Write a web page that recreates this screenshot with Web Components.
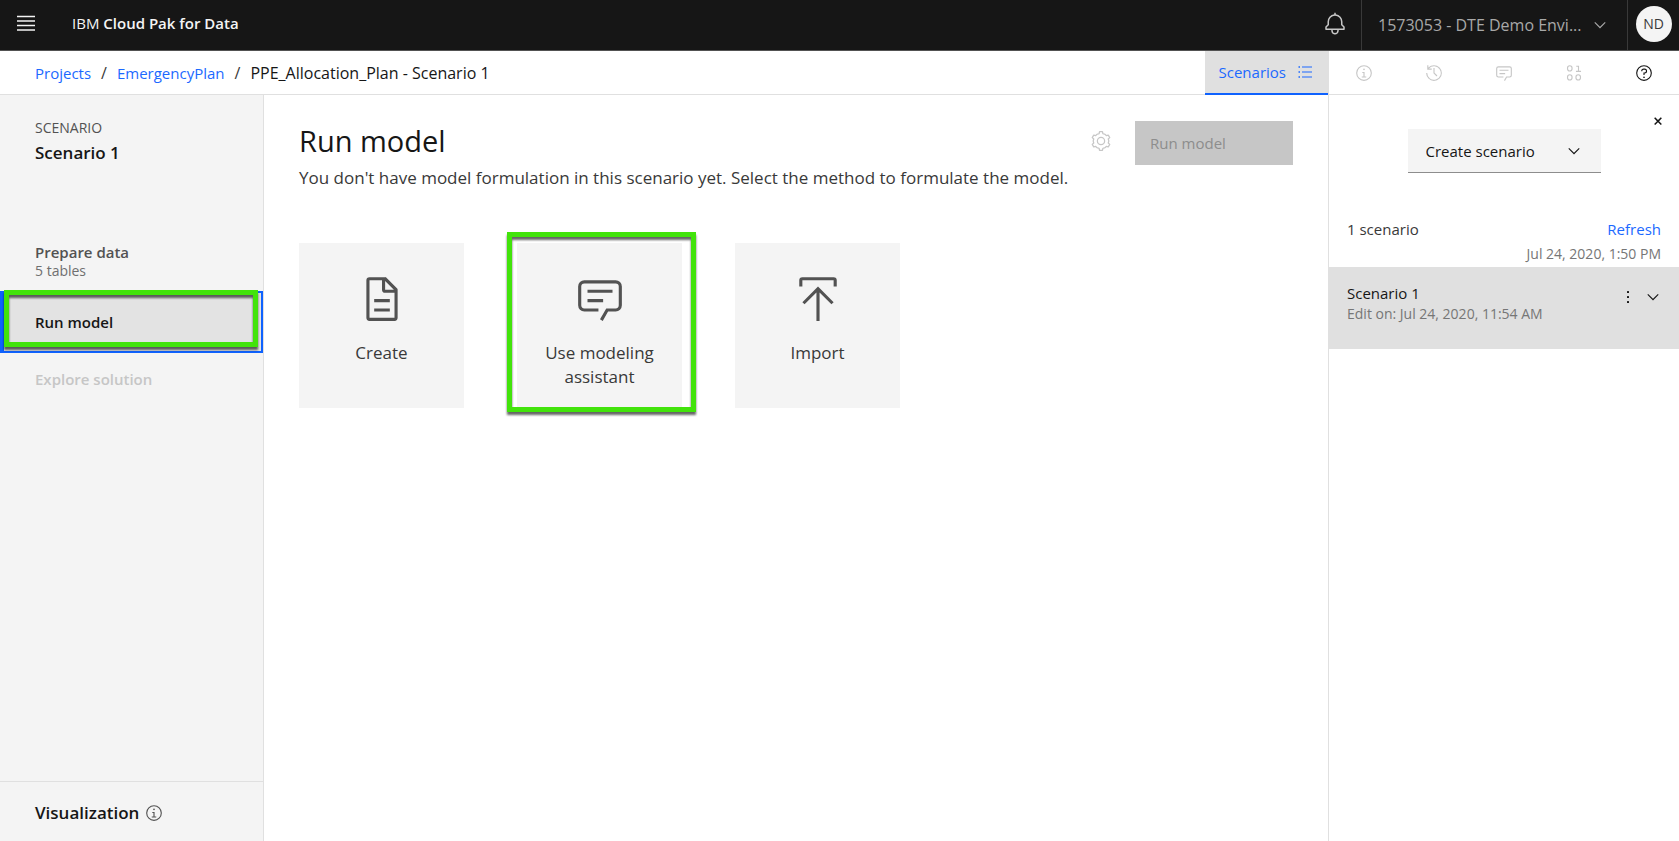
<!DOCTYPE html>
<html lang="en">
<head>
<meta charset="utf-8">
<meta name="viewport" content="width=device-width, initial-scale=1">
<title>Run model - IBM Cloud Pak for Data</title>
<style>
  html, body { margin: 0; }
  body {
    font-family: "Open Sans", "Noto Sans", sans-serif;
    font-size: 15px;
    line-height: 20px;
    color: #161616;
    background: #fff;
    --link: #1c69ff;
    --focus: #0f62fe;
    --line: #e0e0e0;
    --layer: #f4f4f4;
    --selected: #e0e0e0;
    --muted: #767676;
    --disabled: #c6c6c6;
    --side: 264px;
    --panel: 351px;
  }
</style>
</head>
<body>
<cpd-app></cpd-app>

<script>
/* Outline of a six-lobed cog on the 32-unit icon grid. */
const cogPath = () => {
  const pts = [];
  for (let i = 0; i < 6; i++) {
    const a = i * 60 - 90;
    for (const [d, r] of [[-26, 12.4], [-15, 12], [-9, 15], [9, 15], [15, 12], [26, 12.4]]) {
      const t = (a + d) * Math.PI / 180;
      pts.push((16 + r * Math.cos(t)).toFixed(2) + ' ' + (16 + r * Math.sin(t)).toFixed(2));
    }
  }
  return 'M' + pts.join('L') + 'Z';
};

const ICONS = {
  menu: '<path d="M0 3h32v2.6H0zM0 11h32v2.6H0zM0 19h32v2.6H0zM0 27h32v2.6H0z"/>',
  bell: '<path d="M28.7 19.3 26 16.6V13a10 10 0 0 0-9-9.95V1h-2v2.05A10 10 0 0 0 6 13v3.6l-2.7 2.7A1 1 0 0 0 3 20v3a1 1 0 0 0 1 1h7v.78a5.15 5.15 0 0 0 4.5 5.2A5 5 0 0 0 21 25v-1h7a1 1 0 0 0 1-1v-3a1 1 0 0 0-.3-.7zM19 25a3 3 0 0 1-6 0v-1h6zm8-3H5v-1.6l2.7-2.7A1 1 0 0 0 8 17v-4a8 8 0 0 1 16 0v4a1 1 0 0 0 .3.7l2.7 2.7z"/>',
  chevron: '<path d="M16 22 6 12l1.4-1.4 8.6 8.6 8.6-8.6L26 12z"/>',
  info: '<circle cx="16" cy="16" r="13" fill="none" stroke="currentColor" stroke-width="2"/><path d="M17 22v-8h-4v2h2v6h-3v2h8v-2zM16 8a1.5 1.5 0 1 0 1.5 1.5A1.5 1.5 0 0 0 16 8z"/>',
  history: '<path d="M20.59 22 15 16.41V7h2v8.58l5 5.01zM16 2A13.94 13.94 0 0 0 6 6.23V2H4v8h8V8H7.08A12 12 0 1 1 4 16H2A14 14 0 1 0 16 2z"/>',
  chat: '<path d="M17.74 30 16 29l4-7h6a2 2 0 0 0 2-2V8a2 2 0 0 0-2-2H6a2 2 0 0 0-2 2v12a2 2 0 0 0 2 2h9v2H6a4 4 0 0 1-4-4V8a4 4 0 0 1 4-4h20a4 4 0 0 1 4 4v12a4 4 0 0 1-4 4h-4.84zM8 10h16v2H8zM8 16h10v2H8z"/>',
  binary: '<g fill="none" stroke="currentColor" stroke-width="2"><rect x="4.500" y="3" width="8" height="9.500" rx="4"/><rect x="4.500" y="19" width="8" height="9.500" rx="4"/><rect x="19.500" y="19" width="8" height="9.500" rx="4"/><path d="M20 4h4v9M19.500 13h9"/></g>',
  help: '<circle cx="16" cy="16" r="13" fill="none" stroke="currentColor" stroke-width="2"/><circle cx="16" cy="23.5" r="1.5"/><path d="M17 8h-1.5a4.49 4.49 0 0 0-4.5 4.5v.5h2v-.5a2.5 2.5 0 0 1 2.5-2.5H17a2.5 2.5 0 0 1 0 5h-2v4.5h2V17a4.5 4.5 0 0 0 0-9z"/>',
  list: '<path d="M10 5h20v2.2H10zM10 15h20v2.2H10zM10 25h20v2.2H10zM3 4.6h3v3H3zM3 14.6h3v3H3zM3 24.6h3v3H3z"/>',
  cog: `<g fill="none" stroke="currentColor" stroke-width="2" stroke-linejoin="round"><path d="${cogPath()}"/><circle cx="16" cy="16" r="5.8"/></g>`,
  close: '<path d="m7 4 9 9 9-9 3.4 3.4-9 9 9 9L25 28.8l-9-9-9 9-3.4-3.4 9-9-9-9z"/>',
  dots: '<rect x="14" y="4" width="4" height="4" rx="1"/><rect x="14" y="14" width="4" height="4" rx="1"/><rect x="14" y="24" width="4" height="4" rx="1"/>',
  document: '<path d="m25.7 9.3-7-7A.9.9 0 0 0 18 2H8a2 2 0 0 0-2 2v24a2 2 0 0 0 2 2h16a2 2 0 0 0 2-2V10a.9.9 0 0 0-.3-.7zM18 4.4l5.6 5.6H18zM24 28H8V4h8v6a2 2 0 0 0 2 2h6zM11 16h10v2H11zM11 22h10v2H11z"/>',
  upload: '<path d="m6 18 1.41 1.41L15 11.83V30h2V11.83l7.59 7.58L26 18 16 8zM6 8V4h20v4h2V4a2 2 0 0 0-2-2H6a2 2 0 0 0-2 2v4z"/>'
};

const RESET = `
  *, *::before, *::after { box-sizing: border-box; }
  button, select { font: inherit; color: inherit; background: none; border: 0; border-radius: 0; margin: 0; padding: 0; cursor: pointer; }
  button:disabled { cursor: default; }
  a { color: var(--link); text-decoration: none; }
  h1, h2, h3, p, ol, ul { margin: 0; padding: 0; font: inherit; list-style: none; }
`;

function define(name, css, html) {
  customElements.define(name, class extends HTMLElement {
    constructor() {
      super();
      this.attachShadow({ mode: 'open' }).innerHTML = `<style>${RESET}${css}</style>${html}`;
    }
  });
}

/* <cpd-icon name size> */
customElements.define('cpd-icon', class extends HTMLElement {
  connectedCallback() {
    if (this.shadowRoot) return;
    const size = this.getAttribute('size') || 16;
    this.attachShadow({ mode: 'open' }).innerHTML = `
      <style>:host { display: block; flex: none; } svg { display: block; fill: currentColor; }</style>
      <svg width="${size}" height="${size}" viewBox="0 0 32 32" aria-hidden="true">${ICONS[this.getAttribute('name')]}</svg>`;
  }
});

/* Green callout frame drawn over the element that contains it */
define('cpd-callout', `
  :host { display: block; position: absolute; border: 5px solid #42e30b; filter: drop-shadow(0 3px 1px rgba(0,0,0,.6)); pointer-events: none; }
`, '');

/* Drop-down with a chevron; its look comes from custom properties */
customElements.define('cpd-select', class extends HTMLElement {
  connectedCallback() {
    if (this.shadowRoot) return;
    this.attachShadow({ mode: 'open' }).innerHTML = `
      <style>${RESET}
        :host { display: grid; grid-template-columns: 1fr auto; align-items: center; }
        select { grid-area: 1 / 1 / 2 / 3; width: 100%; height: 100%; appearance: none; padding-left: var(--select-pad); }
        option { color: #161616; background: #fff; }
        cpd-icon { grid-area: 1 / 2; pointer-events: none; margin-right: var(--select-pad-end); }
      </style>
      <select aria-label="${this.getAttribute('label')}"><option>${this.getAttribute('value')}</option></select>
      <cpd-icon name="chevron" size="18"></cpd-icon>`;
  }
});

define('cpd-header', `
  :host { display: flex; align-items: stretch; height: 51px; background: #161616; color: #f4f4f4; border-bottom: 1px solid #525252; }
  .brand { display: flex; align-items: center; flex: 1; padding: 0 0 4px 17px; gap: 37px; }
  .brand a { color: inherit; }
  b { font-weight: 600; }
  button { display: grid; place-items: center; }
  .bell { width: 52px; padding-bottom: 2px; color: #c6c6c6; }
  cpd-select { width: 267px; border: solid #393939; border-width: 0 1px; font-size: 16px; color: #a8a8a8; --select-pad: 16px; --select-pad-end: 18px; }
  .user { width: 51px; padding-bottom: 3px; }
  .user span { display: grid; place-items: center; width: 36px; height: 36px; border-radius: 50%; background: #f4f4f4; color: #393939; font-size: 14px; }
`, `
  <div class="brand">
    <button type="button" aria-label="Menu"><cpd-icon name="menu" size="18"></cpd-icon></button>
    <a href="#">IBM <b>Cloud Pak for Data</b></a>
  </div>
  <button class="bell" type="button" aria-label="Notifications"><cpd-icon name="bell" size="24"></cpd-icon></button>
  <cpd-select label="Account" value="1573053 - DTE Demo Envi..."></cpd-select>
  <button class="user" type="button" aria-label="User profile ND"><span>ND</span></button>
`);

define('cpd-toolbar', `
  :host { display: grid; grid-template-columns: 1fr auto var(--panel); height: 44px; border-bottom: 1px solid var(--line); }
  ol { display: flex; align-items: center; padding-left: 35px; font-size: 16px; }
  li + li::before { content: "/"; margin: 0 10px; color: #393939; }
  nav { display: grid; }
  ol a { font-size: 15px; }
  .tab { display: flex; align-items: center; gap: 11px; padding: 0 15px 0 14px; margin-bottom: -1px; background: var(--selected); color: var(--link); border-bottom: 2px solid var(--focus); }
  .tools { display: grid; grid-template-columns: repeat(5, 1fr); border-left: 1px solid var(--line); color: var(--disabled); }
  .tools button { display: grid; place-items: center; }
  .tools .on { color: #161616; }
`, `
  <nav aria-label="Breadcrumb"><ol>
    <li><a href="#">Projects</a></li>
    <li><a href="#">EmergencyPlan</a></li>
    <li aria-current="page">PPE_Allocation_Plan - Scenario 1</li>
  </ol></nav>
  <button class="tab" type="button">Scenarios <cpd-icon name="list" size="16"></cpd-icon></button>
  <div class="tools">
    <button type="button" aria-label="Information" disabled><cpd-icon name="info" size="18"></cpd-icon></button>
    <button type="button" aria-label="History" disabled><cpd-icon name="history" size="18"></cpd-icon></button>
    <button type="button" aria-label="Comments" disabled><cpd-icon name="chat" size="18"></cpd-icon></button>
    <button type="button" aria-label="Data" disabled><cpd-icon name="binary" size="18"></cpd-icon></button>
    <button class="on" type="button" aria-label="Help"><cpd-icon name="help" size="18"></cpd-icon></button>
  </div>
`);

/* Sidebar step; states: current, disabled */
define('cpd-step', `
  :host { display: block; position: relative; }
  button { display: block; width: 100%; padding: 16px 0 18px 35px; text-align: left; font-weight: 600; color: #525252; }
  :host([detailed]) button { padding: 11px 0 11px 35px; }
  ::slotted([slot=detail]) { display: block; font-size: 14px; line-height: 18px; font-weight: 400; color: #6f6f6f; }
  :host([disabled]) button { color: var(--disabled); }
  :host([current]) button { padding: 19px 0 19px 31px; color: #161616; background: #e3e3e3; border: 2px solid var(--focus); border-left-width: 4px; }
`, `<button type="button"><slot></slot><slot name="detail"></slot></button><slot name="callout"></slot>`);

define('cpd-sidebar', `
  :host { display: flex; flex-direction: column; background: var(--layer); border-right: 1px solid var(--line); }
  header { padding: 24px 0 0 35px; }
  header p { font-size: 14px; line-height: 18px; color: #525252; }
  h2 { font-size: 17px; line-height: 24px; font-weight: 600; margin-top: 4px; }
  nav { flex: 1; padding-top: 66px; }
  cpd-callout { inset: -1px 5px 6px 4px; }
  footer { display: flex; align-items: center; gap: 6px; height: 60px; padding: 2px 0 0 35px; border-top: 1px solid var(--line); font-size: 17px; font-weight: 600; }
  footer button { color: #525252; }
`, `
  <header><p>SCENARIO</p><h2>Scenario 1</h2></header>
  <nav aria-label="Scenario steps">
    <cpd-step detailed>Prepare data<span slot="detail">5 tables</span></cpd-step>
    <cpd-step current>Run model<cpd-callout slot="callout"></cpd-callout></cpd-step>
    <cpd-step disabled>Explore solution</cpd-step>
  </nav>
  <footer>Visualization <button type="button" aria-label="About visualization"><cpd-icon name="info" size="18"></cpd-icon></button></footer>
`);

define('cpd-method', `
  :host { display: block; position: relative; }
  button { display: flex; flex-direction: column; align-items: center; gap: 17px; width: 165px; height: 165px; padding: 31px 16px 0; background: var(--layer); color: #525252; font-size: 17px; line-height: 24px; }
  span { color: #393939; }
`, `<button type="button"><slot name="icon"></slot><span><slot></slot></span></button><slot name="callout"></slot>`);

define('cpd-run-model', `
  :host { display: block; padding: 26px 35px; }
  header { display: flex; align-items: flex-start; }
  .intro { flex: 1; }
  h1 { font-size: 29px; line-height: 40px; }
  .intro p { font-size: 17px; line-height: 24px; margin-top: 5px; color: #393939; }
  .cog { height: 40px; margin-right: 24px; color: var(--disabled); }
  .run { width: 158px; height: 44px; padding-left: 15px; text-align: left; background: var(--disabled); color: #8d8d8d; }
  section { display: flex; flex-wrap: wrap; gap: 53px; margin-top: 53px; }
  cpd-callout { inset: -11px -14px -4px -10px; }
`, `
  <header>
    <div class="intro">
      <h1>Run model</h1>
      <p>You don't have model formulation in this scenario yet. Select the method to formulate the model.</p>
    </div>
    <button class="cog" type="button" aria-label="Settings" disabled><cpd-icon name="cog" size="20"></cpd-icon></button>
    <button class="run" type="button" disabled>Run model</button>
  </header>
  <section aria-label="Formulation methods">
    <cpd-method><cpd-icon slot="icon" name="document" size="50"></cpd-icon>Create</cpd-method>
    <cpd-method><cpd-icon slot="icon" name="chat" size="50"></cpd-icon>Use modeling assistant<cpd-callout slot="callout"></cpd-callout></cpd-method>
    <cpd-method><cpd-icon slot="icon" name="upload" size="50"></cpd-icon>Import</cpd-method>
  </section>
`);

define('cpd-scenario-card', `
  :host { display: flex; justify-content: space-between; padding: 15px 17px 26px 18px; background: var(--selected); }
  h3 { line-height: 22px; }
  p { font-size: 14px; line-height: 19px; color: var(--muted); }
  .actions { display: flex; gap: 8px; align-items: center; height: 30px; }
`, `
  <div><h3><slot></slot></h3><p><slot name="edited"></slot></p></div>
  <div class="actions">
    <button type="button" aria-label="More actions"><cpd-icon name="dots" size="16"></cpd-icon></button>
    <button type="button" aria-label="Expand"><cpd-icon name="chevron" size="18"></cpd-icon></button>
  </div>
`);

define('cpd-scenario-panel', `
  :host { display: block; border-left: 1px solid var(--line); }
  .top { display: grid; grid-template-columns: 1fr 193px 1fr; padding-top: 16px; }
  cpd-select { grid-column: 2; height: 44px; margin-top: 18px; background: var(--layer); border-bottom: 1px solid #8d8d8d; --select-pad: 18px; --select-pad-end: 18px; }
  .close { justify-self: end; align-self: start; padding: 5px; margin-right: 11px; }
  .summary { display: grid; grid-template-columns: 1fr auto; padding: 44px 18px 4px; line-height: 24px; }
  .count { color: #393939; }
  time { grid-column: 1 / 3; justify-self: end; font-size: 14px; line-height: 18px; margin-top: 4px; color: var(--muted); }
`, `
  <div class="top">
    <cpd-select label="Create scenario" value="Create scenario"></cpd-select>
    <button class="close" type="button" aria-label="Close"><cpd-icon name="close" size="10"></cpd-icon></button>
  </div>
  <div class="summary">
    <span class="count">1 scenario</span>
    <a href="#">Refresh</a>
    <time datetime="2020-07-24T13:50">Jul 24, 2020, 1:50 PM</time>
  </div>
  <cpd-scenario-card>Scenario 1<span slot="edited">Edit on: Jul 24, 2020, 11:54 AM</span></cpd-scenario-card>
`);

define('cpd-app', `
  :host { display: grid; grid-template-rows: auto auto 1fr; min-height: 100vh; }
  .body { display: grid; grid-template-columns: var(--side) 1fr var(--panel); }
`, `
  <cpd-header></cpd-header>
  <cpd-toolbar></cpd-toolbar>
  <div class="body">
    <cpd-sidebar></cpd-sidebar>
    <cpd-run-model></cpd-run-model>
    <cpd-scenario-panel></cpd-scenario-panel>
  </div>
`);
</script>
</body>
</html>
